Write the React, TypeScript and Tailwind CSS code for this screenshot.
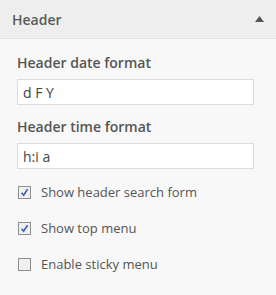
import React from "react";

function Check({ checked }: { checked: boolean }) {
  return (
    <span className="w-[13px] h-[13px] border border-[#8f8f8f] bg-[#f0f0f0] flex items-center justify-center shrink-0">
      {checked && (
        <svg width="9" height="9" viewBox="0 0 9 9">
          <path d="M1.5 4.8 L3.6 7.2 L7.6 1.2" fill="none" stroke="#3b5bb5" strokeWidth="1.6" />
        </svg>
      )}
    </span>
  );
}

export default function App() {
  const font = { fontFamily: '"Open Sans", sans-serif' };
  return (
    <div className="w-[276px] h-[295px] bg-[#f8f8f8] text-[#555]" style={font}>
      <div className="h-[39px] bg-[#eeeeee] border-b border-[#e2e2e2] flex items-center justify-between pl-[12px] pr-[12px]">
        <span className="text-[14px] font-semibold text-[#5a5a5a]">Header</span>
        <svg width="9" height="6" viewBox="0 0 9 6" className="mt-[-1px]">
          <path d="M4.5 0 L9 6 L0 6 Z" fill="#555" />
        </svg>
      </div>
      <div className="px-[17px] pt-[14px] flex flex-col">
        <div className="text-[14px] font-semibold text-[#555] leading-[20px]">Header date format</div>
        <div className="mt-[6px] h-[26px] w-[237px] border border-[#dddddd] bg-white flex items-center px-[5px] text-[14px] text-[#444]">d F Y</div>
        <div className="mt-[12px] text-[14px] font-semibold text-[#555] leading-[20px]">Header time format</div>
        <div className="mt-[6px] h-[26px] w-[237px] border border-[#dddddd] bg-white flex items-center px-[5px] text-[14px] text-[#444]">h:i a</div>
        <div className="flex flex-col gap-[23px] mt-[17px] pl-[1px]">
          <div className="flex items-center gap-[10px] text-[13px] text-[#555] h-[13px]">
            <Check checked /> <span>Show header search form</span>
          </div>
          <div className="flex items-center gap-[10px] text-[13px] text-[#555] h-[13px]">
            <Check checked /> <span>Show top menu</span>
          </div>
          <div className="flex items-center gap-[10px] text-[13px] text-[#555] h-[13px]">
            <Check checked={false} /> <span>Enable sticky menu</span>
          </div>
        </div>
      </div>
    </div>
  );
}
